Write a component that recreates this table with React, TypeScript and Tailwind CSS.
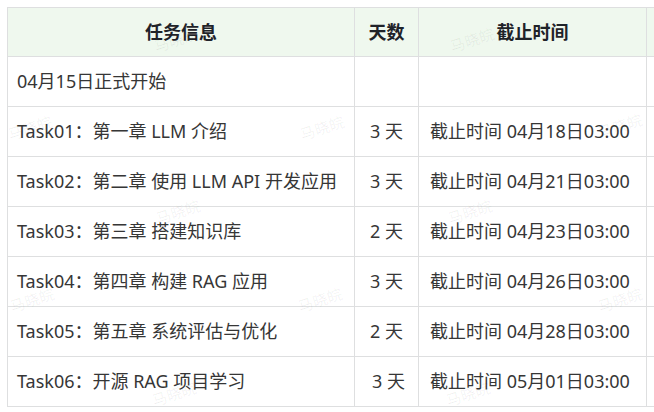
const rows = [
  { task: 'Task01：第一章 LLM 介绍', days: '3 天', due: '截止时间 04月18日03:00' },
  { task: 'Task02：第二章 使用 LLM API 开发应用', days: '3 天', due: '截止时间 04月21日03:00' },
  { task: 'Task03：第三章 搭建知识库', days: '2 天', due: '截止时间 04月23日03:00' },
  { task: 'Task04：第四章 构建 RAG 应用', days: '3 天', due: '截止时间 04月26日03:00' },
  { task: 'Task05：第五章 系统评估与优化', days: '2 天', due: '截止时间 04月28日03:00' },
  { task: 'Task06：开源 RAG 项目学习', days: '3 天', due: '截止时间 05月01日03:00', nudge: true },
];

// faint watermark grid over the table
const marks = [
  [176, 40], [472, 40],
  [30, 128], [322, 128], [620, 126],
  [178, 212], [470, 212],
  [32, 300], [320, 300], [620, 300],
  [174, 394], [468, 394],
];

const cell = 'border-r border-b border-[#dedfe0] flex items-center';

export default function App() {
  return (
    <div
      className="relative w-[654px] h-[412px] overflow-hidden bg-white text-[#363636] text-[18px]"
      style={{ fontFamily: '"Noto Sans", "Noto Sans CJK SC", sans-serif' }}
    >
      <div className="pt-[7px] pl-[7px]">
        <div className="grid grid-cols-[347px_64px_228px_120px] w-max border-l border-t border-[#dedfe0]">
          {/* Header */}
          <div className={`${cell} h-[49px] justify-center bg-[#eff8ee] font-bold text-[#1f2329]`}>任务信息</div>
          <div className={`${cell} h-[49px] justify-center bg-[#eff8ee] font-bold text-[#1f2329]`}>天数</div>
          <div className={`${cell} h-[49px] justify-center bg-[#eff8ee] font-bold text-[#1f2329]`}>截止时间</div>
          <div className={`${cell} h-[49px] bg-[#eff8ee]`} />

          {/* Start row */}
          <div className={`${cell} h-[50px] pl-[9px]`}>04月15日正式开始</div>
          <div className={`${cell} h-[50px]`} />
          <div className={`${cell} h-[50px]`} />
          <div className={`${cell} h-[50px]`} />

          {rows.map((r) => (
            <div key={r.task} className="contents">
              <div className={`${cell} h-[50px] pl-[9px] whitespace-nowrap`}>{r.task}</div>
              <div className={`${cell} h-[50px] justify-center whitespace-nowrap ${r.nudge ? 'pl-[4px]' : ''}`}>{r.days}</div>
              <div className={`${cell} h-[50px] pl-[11px] whitespace-nowrap`}>{r.due}</div>
              <div className={`${cell} h-[50px]`} />
            </div>
          ))}
        </div>
      </div>

      {marks.map(([x, y], i) => (
        <span
          key={i}
          className="absolute pointer-events-none select-none text-[15px] text-black/[0.06] -rotate-[18deg] -translate-x-1/2 -translate-y-1/2 whitespace-nowrap"
          style={{ left: x, top: y }}
        >
          马晓皖
        </span>
      ))}
    </div>
  );
}
